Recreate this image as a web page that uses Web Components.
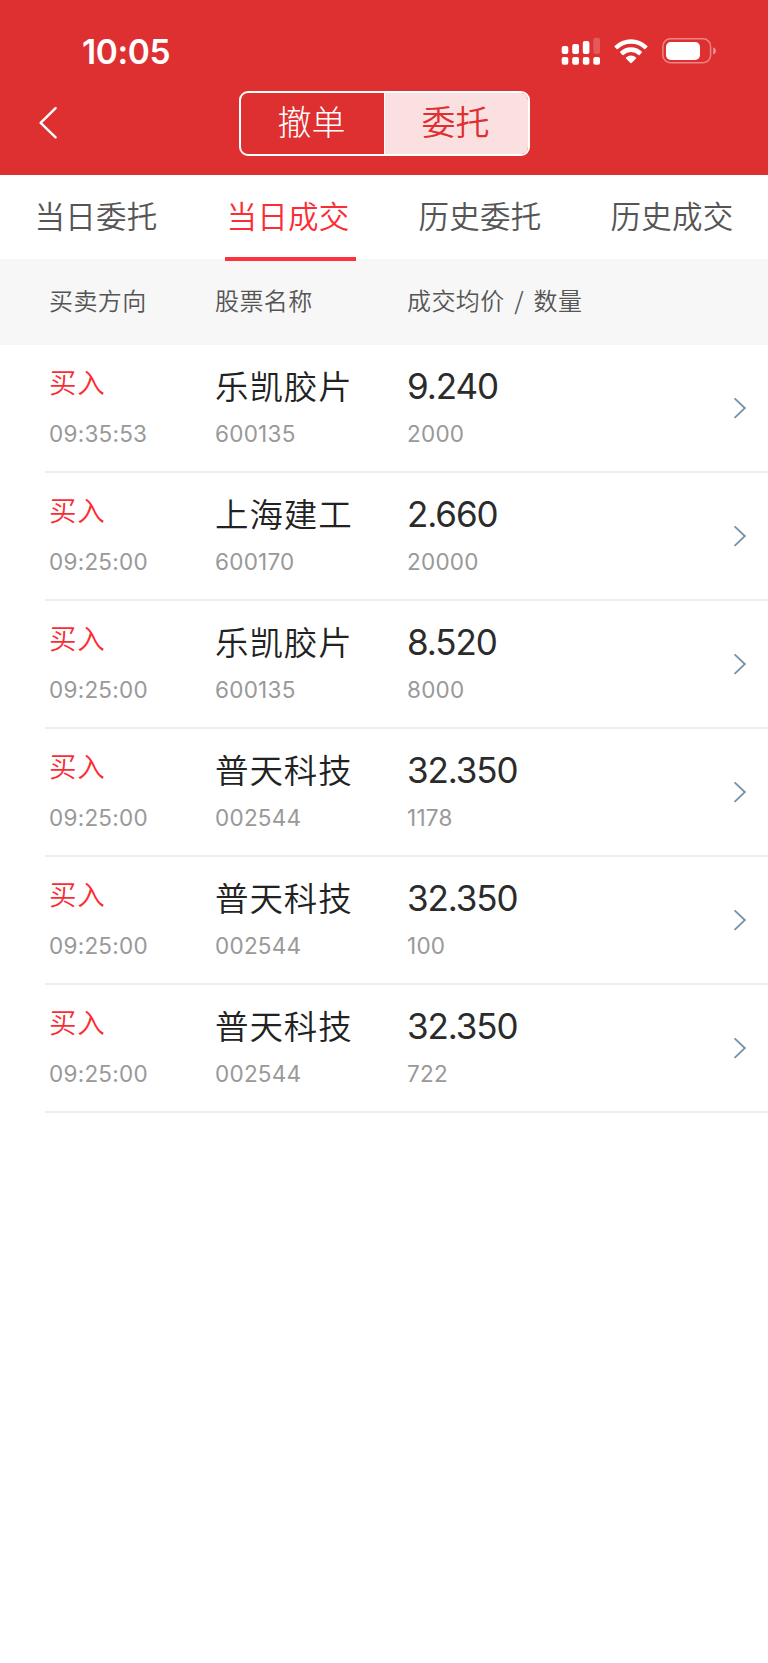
<!DOCTYPE html>
<html lang="zh-CN">
<head>
<meta charset="utf-8">
<title>当日成交</title>
<style>
html, body { margin: 0; background: #fff; }
body { width: 768px; min-height: 1663px; overflow-x: hidden; font-family: Inter, "Noto Sans CJK SC", sans-serif; }
</style>
</head>
<body>
<trade-app></trade-app>
<script>
const CJK = 'font-family:"Noto Sans CJK SC",sans-serif;';
function define(name, html, setup) {
  customElements.define(name, class extends HTMLElement {
    constructor() {
      super();
      const t = document.createElement('template');
      t.innerHTML = html;
      this.attachShadow({ mode: 'open' }).append(t.content.cloneNode(true));
    }
    connectedCallback() { if (setup) setup(this, this.shadowRoot); }
  });
}

define('status-bar', `
<style>
:host { display:flex; height:82px; box-sizing:border-box; padding:31px 52px 10px 82px; justify-content:space-between; color:#fff; }
time { font:600 33.5px/43px Inter,sans-serif; letter-spacing:-.4px; white-space:nowrap; }
svg { display:block; width:156px; height:30px; margin-top:5px; }
</style>
<time>10:05</time>
<svg viewBox="560 36 156 30" fill="#fff">
  <rect x="561.7" y="46" width="6.6" height="8" rx="2"/><rect x="572.2" y="44" width="6.8" height="10" rx="2"/>
  <rect x="582.8" y="41" width="6.6" height="13" rx="2"/><rect x="593.3" y="37.7" width="6.7" height="16.3" rx="2" opacity=".2"/>
  <rect x="561.7" y="57" width="6.6" height="7.7" rx="2"/><rect x="572.2" y="57" width="6.8" height="7.7" rx="2"/>
  <rect x="582.8" y="57" width="6.6" height="7.7" rx="2"/><rect x="593.3" y="57" width="6.7" height="7.7" rx="2"/>
  <path d="M614.7 45.9a23.5 23.5 0 0 1 32.6 0q.6.6 0 1.2l-2 2q-.5.5-1.1 0a19.2 19.2 0 0 0-26.4 0q-.6.5-1.1 0l-2-2q-.6-.6 0-1.2z"/>
  <path d="M620.3 51.6a15.3 15.3 0 0 1 21.4 0q.6.6 0 1.2l-2.1 2.1q-.5.5-1.1 0a11 11 0 0 0-15 0q-.6.5-1.1 0l-2.1-2.1q-.6-.6 0-1.2z"/>
  <path d="M626 57.4a7.3 7.3 0 0 1 10 0q.6.6 0 1.2l-4.4 4.3q-.6.5-1.2 0l-4.4-4.3q-.6-.6 0-1.2z"/>
  <rect x="662.9" y="38.8" width="47.7" height="24" rx="7.6" fill="none" stroke="#fff" stroke-width="1.5" opacity=".42"/>
  <rect x="666" y="42" width="34" height="18" rx="4.8"/>
  <path d="M713.2 47.2q2.8 1 2.8 3.8t-2.8 3.8z" opacity=".48"/>
</svg>`);

define('segment-control', `
<style>
:host { display:grid; grid-template-columns:1fr 1fr; width:291px; height:65.5px; box-sizing:border-box; border:2px solid #fff; border-radius:9px; overflow:hidden; }
::slotted(span) { ${CJK} font-size:34px; line-height:55px; font-weight:300; text-align:center; color:#fff; white-space:nowrap; position:relative; text-indent:-1.5px; }
::slotted(.on) { background:#fbe0e1; color:#de3031; border-left:1px solid #fff; font-weight:350; }
</style><slot></slot>`);

define('nav-bar', `
<style>
:host { display:grid; grid-template-columns:238.5px 291px 1fr; height:92.5px; padding-top:8.5px; box-sizing:border-box; }
svg { width:20px; height:34px; margin:15.5px 0 0 38px; display:block; }
</style>
<svg viewBox="38 106 20 34" fill="none" stroke="#fff" stroke-width="2.4" stroke-linecap="round" stroke-linejoin="round"><path d="M55.6 108.2 40.6 122.8 55.6 137.3"/></svg>
<slot></slot>`);

define('tab-strip', `
<style>
:host { display:grid; grid-template-columns:repeat(4,192px); height:84.5px; background:#fff; }
::slotted(span) { ${CJK} font-size:30.5px; letter-spacing:.2px; line-height:81px; text-align:center; color:#555; position:relative; white-space:nowrap; font-weight:350; }
::slotted(.on) { color:#fb2d34; }
::slotted(.on)::after { content:""; position:absolute; left:32.5px; top:82.5px; width:131.5px; height:3.6px; background:#fb333d; }
</style><slot></slot>`);

define('column-heads', `
<style>
:host { display:grid; grid-template-columns:166px 192px 1fr; height:86px; padding-left:49px; background:#f7f7f7; }
::slotted(span) { ${CJK} font-size:24px; letter-spacing:.4px; word-spacing:3.8px; line-height:81px; color:#555; white-space:nowrap; font-weight:350; }
</style><slot></slot>`);

define('trade-row', `
<style>
:host { display:grid; grid-template-columns:166px 192px 1fr 36px; height:128px; margin-left:45px; padding-left:4px; box-sizing:border-box; border-bottom:2px solid #ededed; }
.cell { display:flex; flex-direction:column; white-space:nowrap; }
.top { height:67px; }
.side { ${CJK} font-size:27.5px; font-weight:350; letter-spacing:.8px; line-height:73px; color:#fb2d34; }
.name { ${CJK} font-size:33.5px; font-weight:350; letter-spacing:.9px; line-height:79px; color:#222; }
.price { font:400 35px/83px Inter,sans-serif; color:#2b2b2b; letter-spacing:-1.1px; }
.sub { font:400 22.5px/44px Inter,sans-serif; color:#999; letter-spacing:.25px; }
svg { display:block; width:16px; height:24px; margin-top:51px; }
</style>
<div class="cell"><div class="top side"></div><div class="sub time"></div></div>
<div class="cell"><div class="top name"></div><div class="sub code"></div></div>
<div class="cell"><div class="top price"></div><div class="sub qty"></div></div>
<svg viewBox="732 396.5 16 24" fill="none" stroke="#7892a5" stroke-width="1.9"><path d="M734.6 398.9 744.8 408.6 734.6 418.4"/></svg>`,
(el, root) => {
  for (const k of ['side', 'time', 'name', 'code', 'price', 'qty']) root.querySelector('.' + k).textContent = el.getAttribute(k);
});

define('trade-app', `
<style>
:host { display:block; width:768px; }
header { background:#de3031; height:174.5px; }
main { display:flex; flex-direction:column; }
</style>
<header>
  <status-bar></status-bar>
  <nav-bar><segment-control><span>撤单</span><span class="on">委托</span></segment-control></nav-bar>
</header>
<tab-strip><span>当日委托</span><span class="on">当日成交</span><span>历史委托</span><span>历史成交</span></tab-strip>
<column-heads><span>买卖方向</span><span>股票名称</span><span>成交均价 / 数量</span></column-heads>
<main>
  <trade-row side="买入" time="09:35:53" name="乐凯胶片" code="600135" price="9.240" qty="2000"></trade-row>
  <trade-row side="买入" time="09:25:00" name="上海建工" code="600170" price="2.660" qty="20000"></trade-row>
  <trade-row side="买入" time="09:25:00" name="乐凯胶片" code="600135" price="8.520" qty="8000"></trade-row>
  <trade-row side="买入" time="09:25:00" name="普天科技" code="002544" price="32.350" qty="1178"></trade-row>
  <trade-row side="买入" time="09:25:00" name="普天科技" code="002544" price="32.350" qty="100"></trade-row>
  <trade-row side="买入" time="09:25:00" name="普天科技" code="002544" price="32.350" qty="722"></trade-row>
</main>`);
</script>
</body>
</html>
